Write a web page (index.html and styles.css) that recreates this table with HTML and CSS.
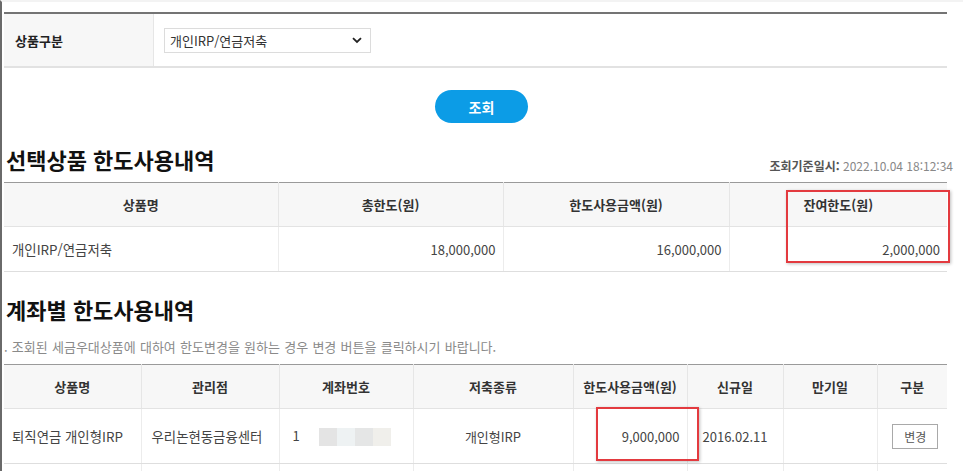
FILE: index.html
```html
<!DOCTYPE html>
<html lang="ko">
<head>
<meta charset="utf-8">
<title>한도사용내역</title>
<link rel="stylesheet" href="styles.css">
</head>
<body>
<div class="page">
  <div class="search">
    <div class="search-label">상품구분</div>
    <div class="search-field">
      <div class="select">
        <span>개인IRP/연금저축</span>
        <svg width="10" height="7" viewBox="0 0 10 7"><path d="M1 1.2 L5 5 L9 1.2" fill="none" stroke="#222" stroke-width="1.8"/></svg>
      </div>
    </div>
  </div>

  <div class="btn-row"><button class="btn-query">조회</button></div>

  <div class="title-row">
    <h2 class="title">선택상품 한도사용내역</h2>
    <div class="stamp"><b>조회기준일시:</b> <span>2022.10.04 18:12:34</span></div>
  </div>

  <div class="table-wrap">
    <table class="grid grid1">
      <colgroup><col class="c274"><col class="c225"><col class="c226"><col class="c218"></colgroup>
      <thead>
        <tr><th>상품명</th><th>총한도(원)</th><th>한도사용금액(원)</th><th>잔여한도(원)</th></tr>
      </thead>
      <tbody>
        <tr><td class="left">개인IRP/연금저축</td><td class="right">18,000,000</td><td class="right">16,000,000</td><td class="right">2,000,000</td></tr>
      </tbody>
    </table>
    <div class="mark mark1"></div>
  </div>

  <h2 class="title title2">계좌별 한도사용내역</h2>
  <p class="note">. 조회된 세금우대상품에 대하여 한도변경을 원하는 경우 변경 버튼을 클릭하시기 바랍니다.</p>

  <div class="table-wrap">
    <table class="grid grid2">
      <colgroup><col class="d137"><col class="d138"><col class="d134"><col class="d160"><col class="d114"><col class="d96"><col class="d94"><col class="d70"></colgroup>
      <thead>
        <tr><th>상품명</th><th>관리점</th><th>계좌번호</th><th>저축종류</th><th>한도사용금액(원)</th><th>신규일</th><th>만기일</th><th>구분</th></tr>
      </thead>
      <tbody>
        <tr>
          <td class="left">퇴직연금 개인형IRP</td>
          <td class="left">우리논현동금융센터</td>
          <td class="left acct">1<span class="blur"><i class="b1"></i><i class="b2"></i><i class="b3"></i><i class="b4"></i></span></td>
          <td class="center">개인형IRP</td>
          <td class="right">9,000,000</td>
          <td class="left">2016.02.11</td>
          <td></td>
          <td class="center"><button class="btn-change">변경</button></td>
        </tr>
        <tr class="next"><td></td><td></td><td></td><td></td><td></td><td></td><td></td><td></td></tr>
      </tbody>
    </table>
    <div class="mark mark2"></div>
  </div>
</div>
</body>
</html>
```

FILE: styles.css
```css
* { box-sizing: border-box; }
html, body { margin: 0; padding: 0; background: #fff; }
body {
  font-family: "Noto Sans CJK KR", "Noto Sans", sans-serif;
  color: #333;
  overflow: hidden;
}
.page {
  border-left: 2px solid #6a6a6a;
  border-top: 2px solid #f3f3f3;
  padding: 10px 10px 0 2px;
  min-height: 471px;
}

/* search */
.search {
  width: 943px;
  display: flex;
  border-top: 2px solid #747474;
  border-bottom: 2px solid #e2e2e2;
  height: 56px;
}
.search-label {
  width: 150px;
  background: #f7f7f7;
  border-right: 1px solid #e6e6e6;
  font-size: 13px;
  font-weight: 700;
  color: #222;
  display: flex;
  align-items: center;
  padding-left: 11px;
}
.search-field {
  flex: 1;
  display: flex;
  align-items: center;
  padding-left: 10px;
}
.select {
  width: 207px;
  height: 25px;
  border: 1px solid #dcdcdc;
  display: flex;
  align-items: center;
  justify-content: space-between;
  padding: 0 8px 0 5px;
  font-size: 13px;
  color: #333;
}

.btn-row { display: flex; justify-content: center; margin-top: 22px; padding-left: 6px; }
.btn-query {
  width: 93px;
  height: 33px;
  border: 0;
  border-radius: 17px;
  background: #0c9ce6;
  color: #fff;
  font-family: inherit;
  font-size: 14px;
  font-weight: 700;
}

.title-row {
  display: flex;
  justify-content: space-between;
  align-items: flex-end;
  margin-top: 23px;
  width: 949px;
}
.title {
  margin: 0;
  font-size: 22px;
  line-height: 27px;
  font-weight: 700;
  color: #111;
  padding-left: 2px;
}
.stamp {
  font-size: 12px;
  line-height: 17px;
  color: #888;
  margin-bottom: -1px;
}
.stamp b { color: #555; }

.table-wrap { position: relative; width: 943px; margin-top: 9px; }
.grid {
  width: 943px;
  table-layout: fixed;
  border-collapse: collapse;
  border-top: 1px solid #9a9a9a;
}
.grid th {
  background: #f7f7f7;
  font-size: 13px;
  font-weight: 700;
  color: #333;
  height: 44px;
  border-left: 1px solid #e6e6e6;
  border-bottom: 1px solid #e3e3e3;
  padding: 0;
}
.grid td {
  font-size: 13px;
  color: #444;
  border-left: 1px solid #ececec;
  border-bottom: 1px solid #dedede;
  padding: 0 8px;
  white-space: nowrap;
}
.grid td.left:first-child { font-size: 13.4px; }
.grid th:first-child, .grid td:first-child { border-left: 0; }
.grid1 td { height: 45px; }
.grid2 td { height: 55px; }
.grid2 th { height: 44px; }
.grid2 tr.next td { height: 8px; border-bottom: 0; }
.left { text-align: left; }
.right { text-align: right; }
.center { text-align: center; }
.grid td.right { padding-right: 7px; }

.c274 { width: 274px; } .c225 { width: 225px; } .c226 { width: 226px; } .c218 { width: 218px; }
.d137 { width: 137px; } .d138 { width: 138px; } .d134 { width: 134px; } .d160 { width: 160px; }
.d114 { width: 114px; } .d96 { width: 96px; } .d94 { width: 94px; } .d70 { width: 70px; }

.grid2 td.left:nth-child(2) { padding-left: 10px; font-size: 13.4px; }
.grid2 td.acct { padding-left: 13px; }
.grid2 td:nth-child(6) { padding-left: 15px; }
.blur { display: inline-flex; vertical-align: middle; margin-left: 19px; }
.blur i { display: block; width: 18px; height: 18px; }
.b1 { background: #e4e4e4; }
.b2 { background: #eef2f3; }
.b3 { background: #e5e6e6; }
.b4 { background: #f0efeb; }

.btn-change {
  width: 46px;
  height: 25px;
  border: 1px solid #a9a9a9;
  background: #fff;
  font-family: inherit;
  font-size: 12px;
  color: #555;
  padding: 0;
  margin-left: 6px;
}

.title2 { margin-top: 24px; }
.note {
  margin: 15px 0 0;
  font-size: 13px;
  line-height: 18px;
  color: #8a8a8a;
  word-spacing: 0.6px;
}
.note + .table-wrap { margin-top: 8px; }

.mark {
  position: absolute;
  border: 2px solid #e33a3f;
  box-shadow: 1px 1px 3px rgba(0,0,0,0.25);
  pointer-events: none;
}
.mark1 { left: 782px; top: 8px; width: 164px; height: 73px; }
.mark2 { left: 592px; top: 43px; width: 103px; height: 54px; }
```
